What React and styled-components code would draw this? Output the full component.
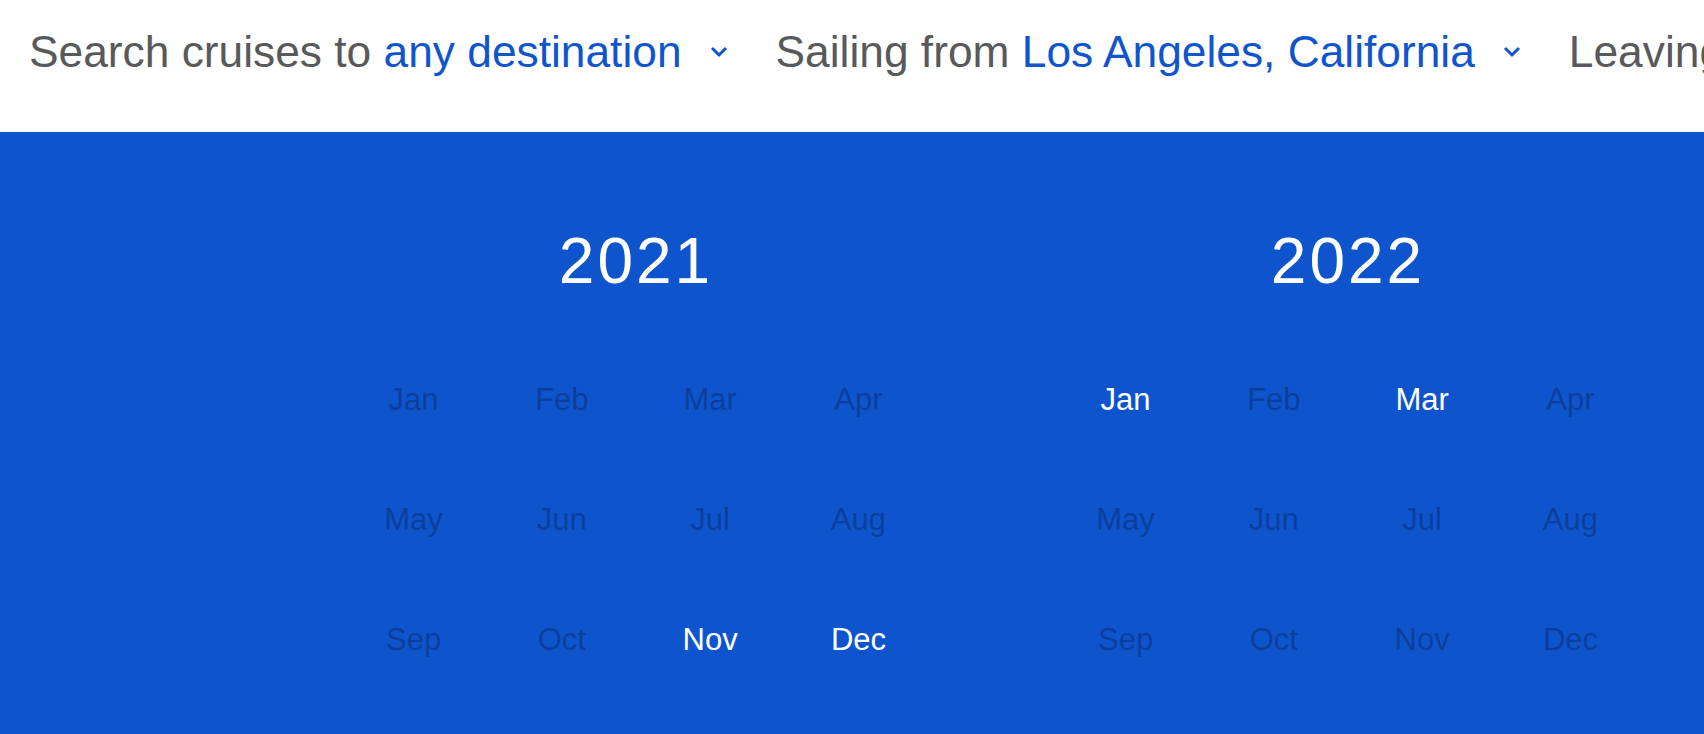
import React from 'react'
import styled, { createGlobalStyle } from 'styled-components'

const GlobalStyle = createGlobalStyle`
  html, body {
    margin: 0;
    padding: 0;
    background: #0e55cd;
    font-family: "Liberation Sans", Arial, sans-serif;
    overflow: hidden;
  }
`

const Page = styled.div`
  width: 1704px;
  height: 734px;
  display: flex;
  flex-direction: column;
  overflow: hidden;
`

const SearchBar = styled.div`
  height: 132px;
  box-sizing: border-box;
  padding: 27px 0 0 29px;
  background: #fff;
  display: flex;
  align-items: flex-start;
  gap: 48px;
  white-space: nowrap;
  overflow: hidden;
  flex-shrink: 0;
`

const Filter = styled.div`
  display: flex;
  align-items: center;
  font-size: 44.3px;
  color: #58595b;
  flex-shrink: 0;
`

const Value = styled.span`
  color: #1155cc;
`

const Chevron = styled.svg`
  margin-left: 28px;
  width: 18px;
  height: 12px;
  flex-shrink: 0;
`

const Calendar = styled.div`
  flex: 1;
  display: flex;
  padding-left: 280px;
  padding-top: 97px;
`

const YearBlock = styled.div`
  width: 712px;
  flex-shrink: 0;
  display: flex;
  flex-direction: column;
  align-items: center;
`

const YearTitle = styled.h2`
  margin: 0;
  font-size: 64px;
  font-weight: 400;
  line-height: 64px;
  letter-spacing: 3px;
  color: #fff;
`

const MonthGrid = styled.div`
  margin-top: 47px;
  display: grid;
  grid-template-columns: repeat(4, 148.3px);
  grid-auto-rows: 119.7px;
  align-items: center;
  justify-items: center;
`

const Month = styled.span`
  font-size: 31px;
  line-height: 31px;
  color: ${props => props.active ? '#ffffff' : '#0b3f9e'};
  cursor: ${props => props.active ? 'pointer' : 'default'};
`

const MONTHS = ['Jan', 'Feb', 'Mar', 'Apr', 'May', 'Jun', 'Jul', 'Aug', 'Sep', 'Oct', 'Nov', 'Dec']

const years = [
  { year: 2021, active: ['Nov', 'Dec'] },
  { year: 2022, active: ['Jan', 'Mar'] }
]

const filters = [
  { label: 'Search cruises to', value: 'any destination' },
  { label: 'Sailing from', value: 'Los Angeles, California' },
  { label: 'Leaving in', value: 'any month' }
]

function ChevronIcon () {
  return (
    <Chevron viewBox='0 0 18 12'>
      <polyline points='2,2 9,9 16,2' fill='none' stroke='#1155cc' strokeWidth='3' />
    </Chevron>
  )
}

export default function App () {
  return (
    <Page>
      <GlobalStyle />
      <SearchBar>
        {filters.map(f => (
          <Filter key={f.label}>
            <span>{f.label} <Value>{f.value}</Value></span>
            <ChevronIcon />
          </Filter>
        ))}
      </SearchBar>
      <Calendar>
        {years.map(y => (
          <YearBlock key={y.year}>
            <YearTitle>{y.year}</YearTitle>
            <MonthGrid>
              {MONTHS.map(m => <Month key={m} active={y.active.includes(m)}>{m}</Month>)}
            </MonthGrid>
          </YearBlock>
        ))}
      </Calendar>
    </Page>
  )
}
